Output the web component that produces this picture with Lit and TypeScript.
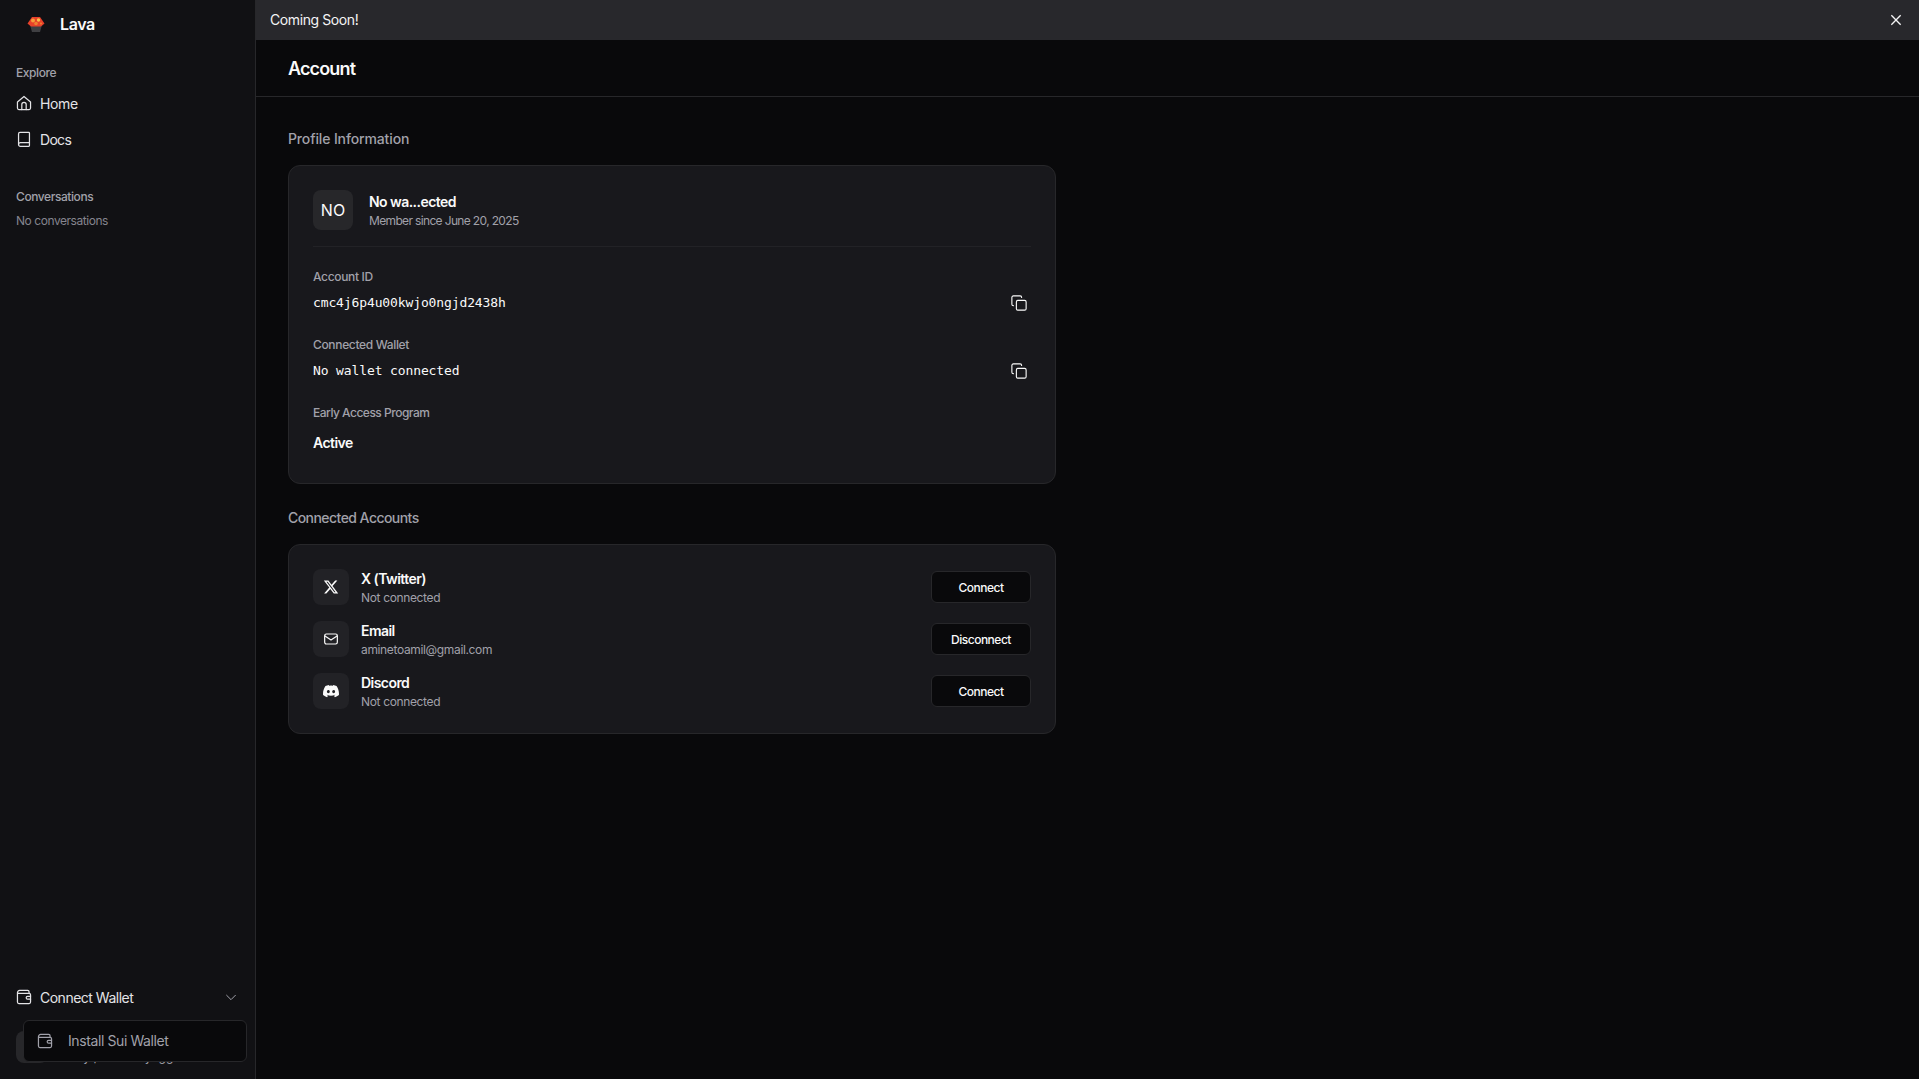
import { LitElement, html, css, svg } from "lit";
import { customElement } from "lit/decorators.js";

const ic = (d: unknown) => html`<svg class="ic" width="16" height="16" viewBox="1 1 22 22" fill="none" stroke="currentColor" stroke-width="1.700" stroke-linecap="round" stroke-linejoin="round">${d}</svg>`;
const mail = (d: unknown) => html`<svg class="ic" width="16" height="16" viewBox="0 0 24 24" fill="none" stroke="currentColor" stroke-width="1.800" stroke-linecap="round" stroke-linejoin="round">${d}</svg>`;
const copy = (d: unknown) => html`<svg class="ic" width="18" height="18" viewBox="0 0 24 24" fill="none" stroke="currentColor" stroke-width="1.500" stroke-linecap="round" stroke-linejoin="round">${d}</svg>`;

const homeI = svg`<path d="M3 10.5 12 3l9 7.5V19a2 2 0 0 1-2 2H5a2 2 0 0 1-2-2z"/><path d="M9 21v-7a3 3 0 0 1 6 0v7"/>`;
const bookI = svg`<path d="M4.500 19.500V5a2 2 0 0 1 2-2h12a1 1 0 0 1 1 1v17a1 1 0 0 1-1 1H7A2.500 2.500 0 0 1 4.500 19.500z"/><path d="M4.500 19.500A2.500 2.500 0 0 1 7 17h12.500"/>`;
const walletI = svg`<path d="M19 7V5a2 2 0 0 0-2-2H6a3 3 0 0 0-3 3v13a2 2 0 0 0 2 2h14a2 2 0 0 0 2-2V9a2 2 0 0 0-2-2H4"/><path d="M21 11h-4a2 2 0 0 0 0 4h4"/>`;
const copyI = svg`<rect x="8.500" y="8.500" width="13" height="13" rx="2"/><path d="M4.500 15.500A2 2 0 0 1 2.500 13.500V4.500a2 2 0 0 1 2-2h9a2 2 0 0 1 2 2"/>`;
const mailI = svg`<rect x="2.500" y="4.500" width="19" height="15" rx="2.500"/><path d="m3 7.500 9 6 9-6"/>`;
const xLogo = html`<svg class="ic" width="16" height="16" viewBox="0 0 24 24" fill="currentColor"><path d="M18.24 2.25h3.31l-7.23 8.26 8.5 11.24H16.17l-5.21-6.82-5.97 6.82H1.68l7.73-8.84L1.25 2.25H8.08l4.71 6.23zm-1.16 17.52h1.83L7.08 4.13H5.12z"/></svg>`;
const discordI = html`<svg class="ic" width="16" height="16" viewBox="0 0 24 24" fill="currentColor"><path d="M20.32 4.37A19.8 19.8 0 0 0 15.4 2.85a13.7 13.7 0 0 0-.63 1.29 18.3 18.3 0 0 0-5.54 0 13 13 0 0 0-.63-1.29 19.7 19.7 0 0 0-4.93 1.52C.55 9.07-.3 13.66.12 18.18a19.9 19.9 0 0 0 6.04 3.05c.49-.66.92-1.36 1.29-2.1a12.9 12.9 0 0 1-2.03-.97c.17-.12.34-.25.5-.38a14.2 14.2 0 0 0 12.16 0c.16.13.33.26.5.38-.65.38-1.33.71-2.04.97.37.74.8 1.44 1.29 2.1a19.8 19.8 0 0 0 6.05-3.05c.5-5.24-.84-9.79-3.56-13.81zM8.02 15.33c-1.18 0-2.16-1.08-2.16-2.42s.95-2.42 2.16-2.42 2.18 1.09 2.16 2.42c0 1.34-.96 2.42-2.16 2.42zm7.96 0c-1.18 0-2.16-1.08-2.16-2.42s.95-2.42 2.16-2.42 2.18 1.09 2.16 2.42c0 1.34-.95 2.42-2.16 2.42z"/></svg>`;

@customElement("app-root")
export class AppRoot extends LitElement {
  static styles = css`
    :host { display: block; width: 100%; height: 100vh; font-family: Inter, "Noto Sans", sans-serif; color: #fafafa; background: #09090b; overflow: hidden; }
    * { box-sizing: border-box; }
    .ic { display: block; flex: none; }
    .app { display: flex; height: 100%; }
    .side { width: 256px; flex: none; background: #111114; border-right: 1px solid #27272a; display: flex; flex-direction: column; padding: 0 16px; position: relative; }
    .brand { height: 48px; display: flex; align-items: center; gap: 14px; padding-left: 10px; font-size: 16px; font-weight: 600; letter-spacing: -0.4px; }
    .grp-label { font-size: 12px; font-weight: 500; color: #a1a1aa; line-height: 16px; letter-spacing: -0.42px; }
    .explore { margin-top: 17px; }
    .nav { height: 36px; display: flex; align-items: center; gap: 8px; font-size: 14px; color: #e4e4e7; letter-spacing: -0.35px; }
    .nav.first { margin-top: 4px; }
    .nav.docs { letter-spacing: -0.7px; }
    .conv { margin-top: 32px; }
    .none { margin-top: 8px; font-size: 12px; line-height: 16px; color: #85858e; letter-spacing: -0.45px; }
    .spacer { flex: 1; }
    .wallet { height: 36px; display: flex; align-items: center; gap: 8px; font-size: 14px; color: #e4e4e7; margin-bottom: 64px; letter-spacing: -0.5px; }
    .wallet .chev { margin-left: auto; color: #a1a1aa; }
    .behind { position: absolute; left: 16px; bottom: 16px; display: flex; gap: 28px; align-items: flex-end; }
    .behind .av { width: 32px; height: 32px; border-radius: 8px; background: #27272a; }
    .behind span { font-size: 12px; color: #a1a1aa; line-height: 14px; margin-bottom: -1px; letter-spacing: 0.1px; white-space: nowrap; }
    .pop { position: absolute; left: 23px; top: 1020px; width: 224px; height: 42px; background: #09090b; border: 1px solid #27272a; border-radius: 6px; display: flex; align-items: center; gap: 15px; padding-left: 13px; font-size: 14px; color: #a1a1aa; letter-spacing: -0.4px; }
    .pop span { margin-top: -1px; }
    .main { flex: 1; min-width: 0; display: flex; flex-direction: column; }
    .banner { height: 40px; flex: none; background: #28282c; display: flex; align-items: center; justify-content: space-between; padding: 0 15px 0 14px; font-size: 14px; color: #f4f4f5; letter-spacing: -0.4px; }
    .banner span { margin-top: -2px; }
    .head { height: 57px; flex: none; border-bottom: 1px solid #27272a; display: flex; align-items: center; padding-left: 32px; font-size: 18px; font-weight: 600; letter-spacing: -0.85px; }
    .content { padding: 32px; width: 832px; }
    .sec { font-size: 14px; font-weight: 500; line-height: 20px; color: #a1a1aa; margin-bottom: 16px; }
    .sec.p { letter-spacing: -0.13px; }
    .sec.c { letter-spacing: -0.55px; }
    .card { background: #18181c; border: 1px solid #27272a; border-radius: 12px; padding: 24px; }
    .card + .sec { margin-top: 24px; }
    .who { display: flex; align-items: center; gap: 16px; padding-bottom: 16px; border-bottom: 1px solid #222226; }
    .avatar { width: 40px; height: 40px; border-radius: 8px; background: #27272a; display: grid; place-items: center; font-size: 16px; font-weight: 400; }
    .t { font-size: 14px; font-weight: 600; line-height: 20px; letter-spacing: -0.55px; }
    .s { font-size: 12px; line-height: 17px; color: #a1a1aa; letter-spacing: -0.35px; }
    .s.m { letter-spacing: -0.65px; }
    .field { margin-top: 19px; }
    .who + .field { margin-top: 22px; }
    .lab { font-size: 12px; font-weight: 500; line-height: 16px; color: #a1a1aa; letter-spacing: -0.34px; }
    .lab.e { letter-spacing: -0.5px; }
    .val { display: flex; align-items: center; justify-content: space-between; height: 32px; margin-top: 1px; font-family: "DejaVu Sans Mono", "Liberation Mono", monospace; font-size: 13px; letter-spacing: -0.12px; padding-right: 3px; }
    .val .ic { margin-top: 1px; }
    .active { font-size: 14px; font-weight: 600; line-height: 20px; margin-top: 12px; padding-bottom: 6px; letter-spacing: -0.55px; }
    .rows { display: flex; flex-direction: column; gap: 16px; }
    .row { display: flex; align-items: center; gap: 12px; height: 36px; }
    .box { width: 36px; height: 36px; border-radius: 8px; background: #222226; display: grid; place-items: center; }
    .grow { flex: 1; }
    .btn { width: 100px; height: 32px; border-radius: 6px; background: #09090b; border: 1px solid #27272a; color: #fafafa; font: 500 12px Inter, sans-serif; letter-spacing: -0.5px; }
  `;

  private row(icon: unknown, t: string, s: string, b: string) {
    return html`<div class="row"><div class="box">${icon}</div><div class="grow"><div class="t">${t}</div><div class="s">${s}</div></div><button class="btn">${b}</button></div>`;
  }

  render() {
    return html`<div class="app">
      <aside class="side">
        <div class="brand">
          <svg class="ic" width="20" height="20" viewBox="0 0 20 20"><path d="M4 11h12l-2 7H6z" fill="#3f3f42"/><path d="M1.500 9.500 6 3h8l4.500 6.500L15 12.500H5z" fill="#e8412a"/><circle cx="7" cy="6.500" r="2" fill="#f59e3b"/><circle cx="12.500" cy="6" r="1.700" fill="#f8c24a"/><circle cx="10" cy="9.500" r="1.800" fill="#f08030"/><circle cx="15" cy="9.500" r="1" fill="#f08030"/></svg>
          Lava
        </div>
        <div class="grp-label explore">Explore</div>
        <div class="nav first">${ic(homeI)}Home</div>
        <div class="nav docs">${ic(bookI)}Docs</div>
        <div class="grp-label conv">Conversations</div>
        <div class="none">No conversations</div>
        <div class="spacer"></div>
        <div class="wallet">${ic(walletI)}Connect Wallet<svg class="ic chev" width="16" height="16" viewBox="0 0 24 24" fill="none" stroke="currentColor" stroke-width="1.500"><path d="m5 9 7 7 7-7"/></svg></div>
        <div class="behind"><div class="av"></div><span>by protocol yogg</span></div>
        <div class="pop">${ic(walletI)}<span>Install Sui Wallet</span></div>
      </aside>
      <main class="main">
        <div class="banner"><span>Coming Soon!</span><svg class="ic" width="16" height="16" viewBox="0 0 24 24" fill="none" stroke="currentColor" stroke-width="2"><path d="M5 5l14 14M19 5 5 19"/></svg></div>
        <div class="head">Account</div>
        <div class="content">
          <div class="sec p">Profile Information</div>
          <div class="card">
            <div class="who"><div class="avatar">NO</div><div><div class="t">No wa...ected</div><div class="s m">Member since June 20, 2025</div></div></div>
            <div class="field"><div class="lab">Account ID</div><div class="val">cmc4j6p4u00kwjo0ngjd2438h${copy(copyI)}</div></div>
            <div class="field"><div class="lab">Connected Wallet</div><div class="val">No wallet connected${copy(copyI)}</div></div>
            <div class="field"><div class="lab e">Early Access Program</div><div class="active">Active</div></div>
          </div>
          <div class="sec c">Connected Accounts</div>
          <div class="card"><div class="rows">
            ${this.row(xLogo, "X (Twitter)", "Not connected", "Connect")}
            ${this.row(mail(mailI), "Email", "aminetoamil@gmail.com", "Disconnect")}
            ${this.row(discordI, "Discord", "Not connected", "Connect")}
          </div></div>
        </div>
      </main>
    </div>`;
  }
}
